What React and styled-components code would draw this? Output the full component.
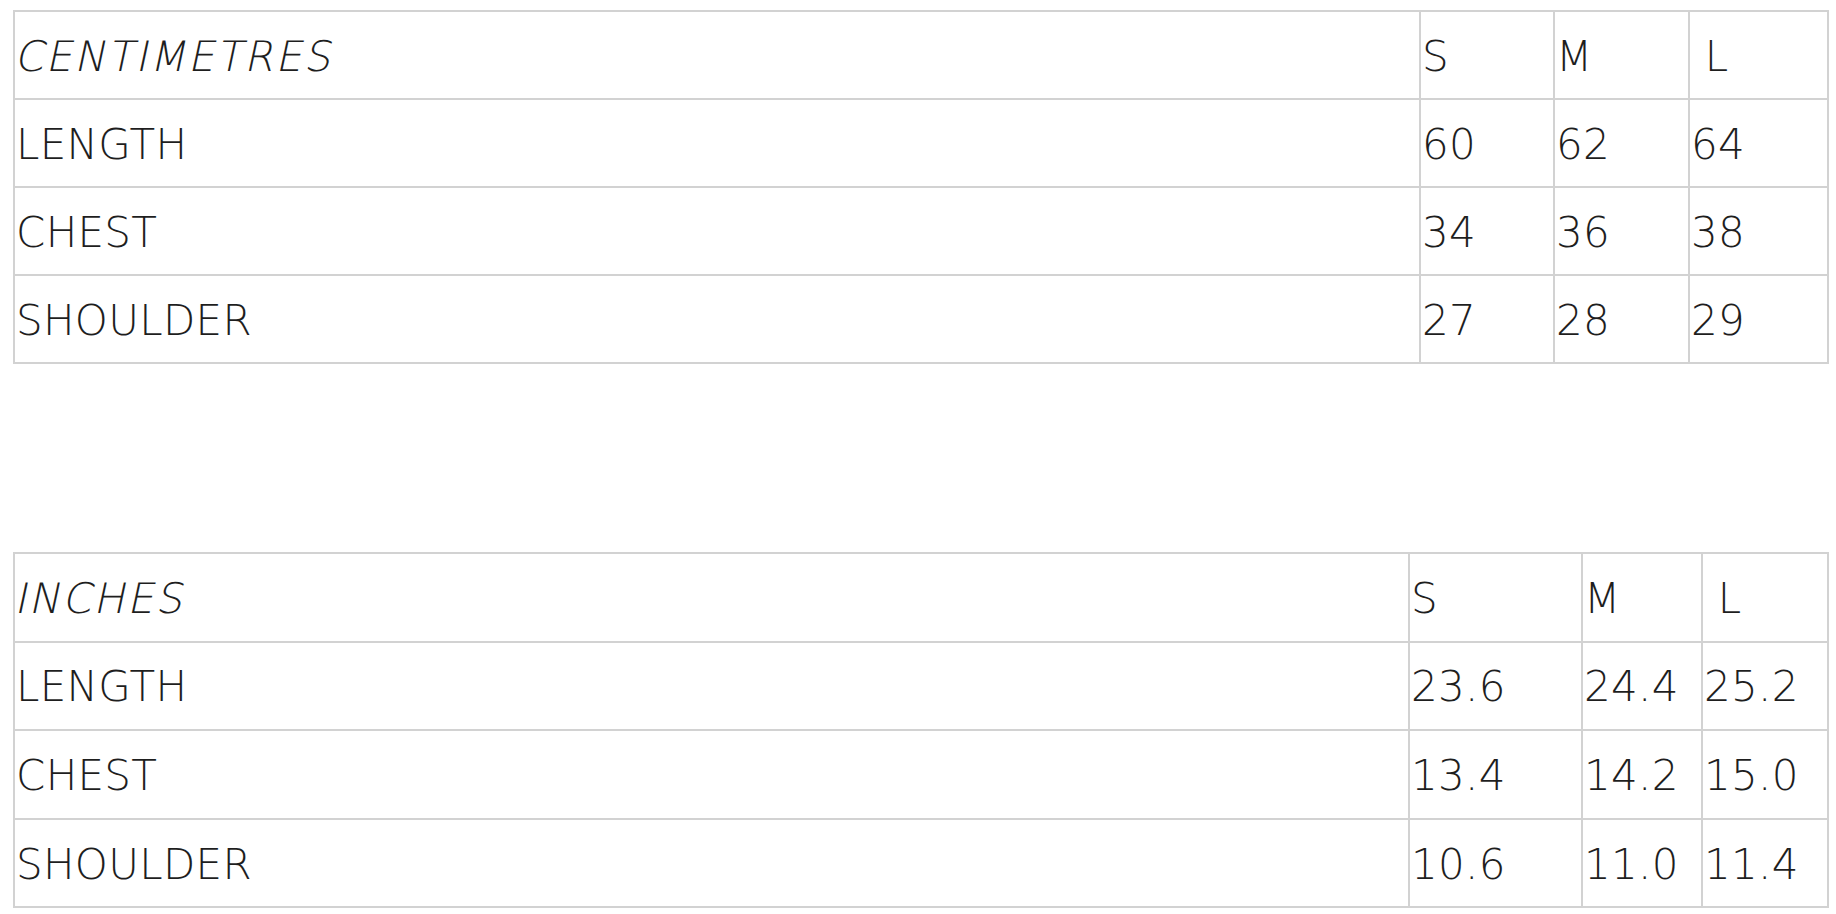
import React from "react";
import styled, { createGlobalStyle } from "styled-components";

const GlobalStyle = createGlobalStyle`
  html, body {
    margin: 0;
    padding: 0;
    background: #ffffff;
  }
  body {
    font-family: "DejaVu Sans", "Liberation Sans", sans-serif;
    color: #1e1e1e;
  }
`;

const Page = styled.div`
  display: flex;
  flex-direction: column;
  gap: 188px;
  padding: 10px 9px 0 13px;
`;

const Table = styled.table`
  width: 1814px;
  table-layout: fixed;
  border-collapse: collapse;
  border: 2px solid #d2d2d2;
  font-family: "DejaVu Sans", "Liberation Sans", sans-serif;
  font-weight: 200;
  font-size: 42px;
  letter-spacing: 0.3px;
  color: #1e1e1e;
`;

const Row = styled.tr`
  height: ${(p) => p.$h}px;
`;

const Cell = styled.td`
  border: 2px solid #d2d2d2;
  padding: 2px 0 0 1px;
  vertical-align: middle;
  white-space: pre;
`;

// the light face has no italic, so slant it by hand
const Unit = styled.span`
  display: inline-block;
  transform: skewX(-12deg);
  transform-origin: 0 60%;
  letter-spacing: 2px;
`;

const tables = [
  {
    unit: "CENTIMETRES",
    rowH: 88,
    cols: [1406, 134, 135, 139],
    rows: [
      ["LENGTH", "60", "62", "64"],
      ["CHEST", "34", "36", "38"],
      ["SHOULDER", "27", "28", "29"],
    ],
  },
  {
    unit: "INCHES",
    rowH: 88.6,
    cols: [1395, 173, 120, 126],
    rows: [
      ["LENGTH", "23.6", "24.4", "25.2"],
      ["CHEST", "13.4", "14.2", "15.0"],
      ["SHOULDER", "10.6", "11.0", "11.4"],
    ],
  },
];

function SizeTable({ unit, rowH, cols, rows }) {
  return (
    <Table>
      <colgroup>
        {cols.map((w, i) => (
          <col key={i} style={{ width: w }} />
        ))}
      </colgroup>
      <tbody>
        <Row $h={rowH}>
          <Cell>
            <Unit>{unit}</Unit>
          </Cell>
          <Cell>S</Cell>
          <Cell>M</Cell>
          <Cell>{"\u00a0L"}</Cell>
        </Row>
        {rows.map((r) => (
          <Row key={r[0]} $h={rowH}>
            {r.map((v, i) => (
              <Cell key={i}>{v}</Cell>
            ))}
          </Row>
        ))}
      </tbody>
    </Table>
  );
}

export default function App() {
  return (
    <>
      <GlobalStyle />
      <Page>
        {tables.map((t) => (
          <SizeTable key={t.unit} {...t} />
        ))}
      </Page>
    </>
  );
}
